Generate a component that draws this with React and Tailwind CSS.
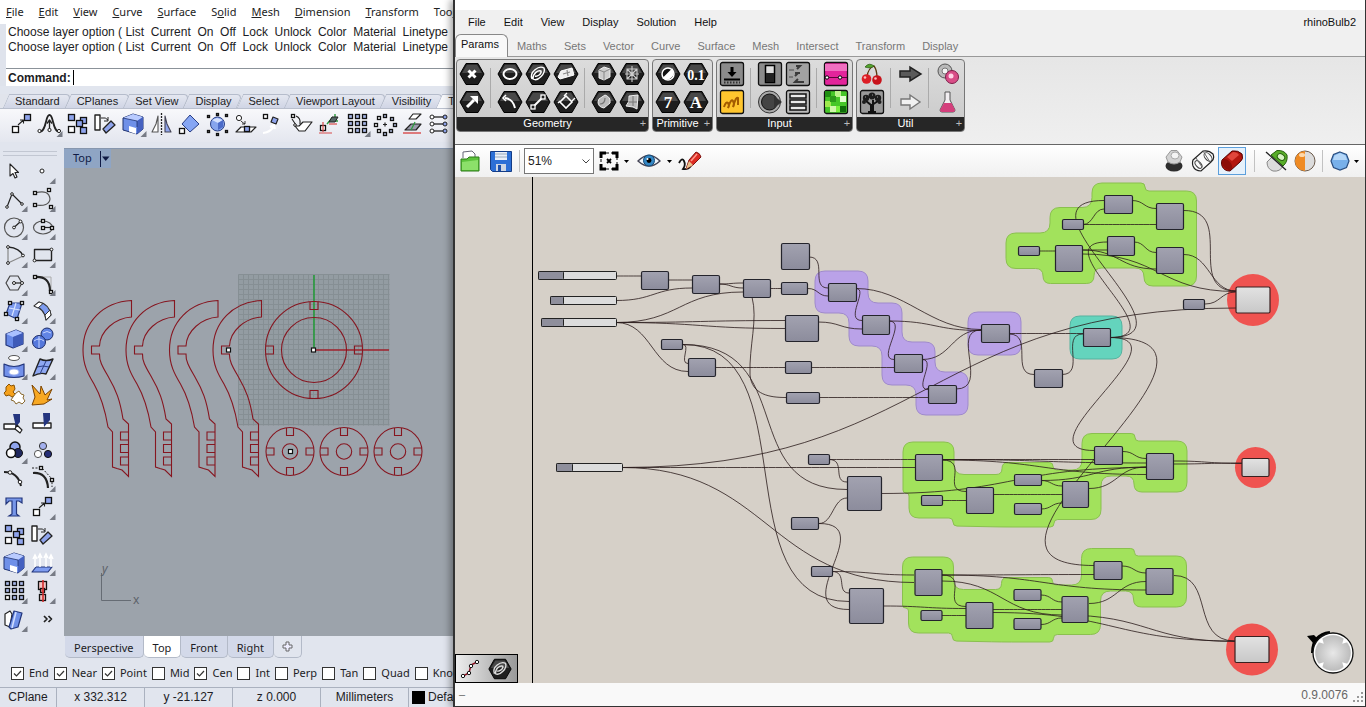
import { useState } from 'react'
import clsx from 'clsx'

const BLUE = '#8fa4ec'

// ---------- shared helpers ----------

// Turns a list of corners into a path with every corner rounded by r.
function roundedPath(pts, r) {
  const n = pts.length
  let d = ''
  pts.forEach(([x, y], i) => {
    const [px, py] = pts[(i + n - 1) % n]
    const [nx, ny] = pts[(i + 1) % n]
    const lenIn = Math.hypot(px - x, py - y)
    const lenOut = Math.hypot(nx - x, ny - y)
    const k = Math.min(r, lenIn / 2, lenOut / 2)
    const ax = x + ((px - x) / lenIn) * k
    const ay = y + ((py - y) / lenIn) * k
    const bx = x + ((nx - x) / lenOut) * k
    const by = y + ((ny - y) / lenOut) * k
    d += `${i ? 'L' : 'M'}${ax} ${ay}Q${x} ${y} ${bx} ${by}`
  })
  return d + 'Z'
}

function wirePath([x1, y1, x2, y2, c1, c2]) {
  const mid = (x1 + x2) / 2
  return `M${x1} ${y1}C${c1 ?? mid} ${y1} ${c2 ?? mid} ${y2} ${x2} ${y2}`
}

// ---------- Rhino icons ----------

function Sq({ x, y, s = 5, fill = '#fff' }) {
  return <rect x={x + 0.5} y={y + 0.5} width={s} height={s} fill={fill} stroke="#111" strokeWidth="1.3" />
}

function Dot({ x, y, r = 1.6, fill = '#fff' }) {
  return <circle cx={x} cy={y} r={r} fill={fill} stroke="#222" strokeWidth="1" />
}

function Line({ d, w = 1.2, c = '#222', fill = 'none', dash }) {
  return <path d={d} fill={fill} stroke={c} strokeWidth={w} strokeDasharray={dash} strokeLinejoin="round" />
}

const MoveIcon = (
  <>
    <Sq x={5} y={16} s={6} />
    <Sq x={17} y={4} s={6} fill={BLUE} />
    <Line d="M11 15L16.500 10M13 10H16.500V13.500" w={1.1} />
  </>
)
const CopyIcon = (
  <>
    <Sq x={5} y={4} s={6} fill={BLUE} />
    <Sq x={5} y={16} s={6} />
    <Sq x={17} y={7} s={6} fill={BLUE} />
    <Sq x={13} y={10} s={6} fill={BLUE} />
    <Sq x={17} y={17} s={6} fill={BLUE} />
  </>
)
const RotateIcon = (
  <>
    <Line d="M4 5H9V20H4Z" fill="#fff" w={1.4} />
    <Line d="M20 11L24 15L15 23L12 19Z" fill={BLUE} w={1.3} />
    <Line d="M10 8Q15 7 17 10M17 7V11H13" w={1} />
  </>
)
const NotchCubeIcon = (
  <>
    <Line d="M4 8L14 4L24 7V19L18 24L4 20Z" fill="#6f90e8" w={1} c="#1f3270" />
    <path d="M4 8L14 4L24 7L18 11Z" fill="#b9cbff" />
    <path d="M18 11L24 7V19L18 24Z" fill="#4561c0" />
    <path d="M10 16L17 18V24L10 21.500Z" fill="#fff" />
    <Line d="M4 8L18 11V17" w={0.8} c="#1f3270" />
  </>
)
const GridIcon = (
  <>
    {[0, 1, 2].map(r => [0, 1, 2].map(c => (
      <Sq key={`${r}${c}`} x={5 + c * 7} y={4 + r * 7} s={4} fill={r === 2 && c === 0 ? '#fff' : '#a9b8e8'} />
    )))}
  </>
)

const TOOLBAR = [
  { name: 'Move', icon: MoveIcon },
  {
    name: 'Soft move', fly: true, icon: (
      <>
        <Line d="M4 22C12 22 10 5 14.500 5S17 22 25 22" w={1.8} />
        <Line d="M14.500 22V11M12 13.500L14.500 10L17 13.500" w={1.3} />
        <Dot x={4.500} y={21} /><Dot x={14.500} y={20} /><Dot x={24} y={21} />
      </>
    ),
  },
  { name: 'Copy', icon: CopyIcon },
  { name: 'Rotate', icon: RotateIcon },
  { name: 'Scale', icon: NotchCubeIcon, fly: true },
  {
    name: 'Mirror', icon: (
      <>
        <Line d="M14.500 3V25" dash="2 1" w={1.3} />
        <Line d="M11 6V22H5L9 14Z" fill="#fff" w={1.1} c="#555" />
        <Line d="M18 6V22H24L20 14Z" fill={BLUE} w={1.1} c="#445" />
      </>
    ),
  },
  {
    name: 'Orient', icon: (
      <>
        <Line d="M15 5L24 14L15 22L7 14Z" fill="#86a6f4" w={1} c="#2a3f86" />
        <Sq x={4} y={18} s={5} />
      </>
    ),
  },
  {
    name: 'Cage', icon: (
      <>
        <circle cx="14.500" cy="14" r="7" fill="#87a5ee" stroke="#2a3f86" />
        <path d="M9 10L14 8L20 10L15 13Z" fill="#d6e2ff" />
        <path d="M15 13L20 10V17L15 20Z" fill="#4c6bc9" />
        {[[4, 5], [22, 4], [4, 20], [22, 20], [13, 3], [13, 23]].map(([x, y]) => <Sq key={`${x}-${y}`} x={x} y={y} s={2} />)}
      </>
    ),
  },
  {
    name: 'Project', icon: (
      <>
        <Dot x={8} y={8} r={2.6} />
        <Line d="M5 22L10 17H25L20 22Z" fill="#fff" w={1.2} />
        <Line d="M10 11Q12 13 14 14M14 11V14H11" w={0.9} />
        <Sq x={13} y={16} s={5} fill={BLUE} />
      </>
    ),
  },
  {
    name: 'Twist', icon: (
      <>
        <Sq x={4} y={4} s={4} />
        <Line d="M14 7L19 9L17 14L12 12Z" fill={BLUE} />
        <Line d="M4 23Q12 22 15 16M11 17L15 15L16 19" w={2} c="#fff" />
      </>
    ),
  },
  {
    name: 'Orient on surface', icon: (
      <>
        <Sq x={4} y={4} s={3} />
        <Line d="M9 6Q14 8 13 14M5 9L9 15" w={1.1} />
        <Line d="M8 16L12 21H18L25 12H16L12 16Z" fill="#fff" w={1.2} />
        <Dot x={8} y={15} r={1.3} />
      </>
    ),
  },
  {
    name: 'Remap', icon: (
      <>
        <Sq x={5} y={15} s={5} />
        <Line d="M4 23H17M8 22V12" c="#d84a4a" w={1.2} />
        <Line d="M12 14L18 7M20 9V4M14 11L23 11" c="#2b9b3c" w={1.4} />
        <Line d="M14 12L17 7H23L20 12Z" fill="#566" w={1} />
        <Line d="M14 14H22" c="#d84a4a" />
      </>
    ),
  },
  { name: 'Rectangular array', icon: GridIcon, fly: true },
  {
    name: 'Polar array', icon: (
      <>
        {[[12, 4], [19, 7], [22, 13], [18, 19], [12, 22], [6, 19], [3, 13], [6, 6]].map(([x, y], i) => (
          <Sq key={i} x={x} y={y} s={3} fill={i > 4 ? '#fff' : '#b3bede'} />
        ))}
        <Line d="M12 14.500H16M14 12.500V16.500" />
      </>
    ),
  },
  {
    name: 'Flow along surface', icon: (
      <>
        <Line d="M10 9L14 4H22L17 9Z" fill="#fff" />
        <Line d="M6 20L12 14H22L17 20Z" fill="#99a" />
        <Line d="M4 23H22" c="#d84a4a" w={1.4} />
        <Line d="M12 20L16 12" c="#2b9b3c" w={1.3} />
      </>
    ),
  },
  {
    name: 'Set points', icon: (
      <>
        {[7, 14, 21].map(y => (
          <g key={y}>
            <Line d={`M6 ${y}H18`} w={1.3} />
            <Dot x={5} y={y} r={2} /><Dot x={18} y={y} r={2} fill={BLUE} />
          </g>
        ))}
      </>
    ),
  },
]

const PALETTE = [
  { name: 'Select', icon: <Line d="M10 7V19L13 16.500L15 21L17 20L15 15.500H18.500Z" fill="#fff" w={1.1} /> },
  { name: 'Point', fly: true, icon: <Dot x={14} y={14} r={2} /> },
  { name: 'Polyline', fly: true, icon: <><Line d="M7 22L12 9L22 19" /><Dot x={7} y={22} r={1.3} /><Dot x={12} y={9} r={1.3} /><Dot x={22} y={19} r={1.3} /></> },
  { name: 'Curve', fly: true, icon: <><Line d="M7 8Q21 4 22 14Q21 22 7 20" c="#555" /><Sq x={5} y={6} s={3} /><Sq x={19} y={3} s={3} /><Sq x={5} y={18} s={3} /><Sq x={21} y={20} s={3} /></> },
  { name: 'Circle', fly: true, icon: <><circle cx="14" cy="14.500" r="9.500" fill="none" stroke="#555" strokeWidth="1.200" /><Line d="M14 14.500L20 9" /><Dot x={14} y={14.500} r={1.4} /><Dot x={20.500} y={8.500} r={1.4} /></> },
  { name: 'Ellipse', fly: true, icon: <><ellipse cx="15" cy="14.500" rx="9.500" ry="6.500" fill="none" stroke="#555" strokeWidth="1.200" /><Line d="M15 14.500H24" /><Sq x={13} y={13} s={3} /><Sq x={13} y={6} s={3} /><Sq x={22} y={13} s={3} /></> },
  { name: 'Arc', fly: true, icon: <><Line d="M8 6Q20 7 23 15" w={1.5} /><Line d="M8 6V22L23 15" c="#888" /><Dot x={8} y={6} r={1.4} /><Dot x={8} y={22} r={1.4} /><Dot x={23} y={14.500} r={1.4} /></> },
  { name: 'Rectangle', fly: true, icon: <><Line d="M6.500 8.500H23.500V19.500H6.500Z" w={1.4} /><Dot x={6.500} y={19.500} r={1.4} /><Dot x={23.500} y={8.500} r={1.4} /></> },
  { name: 'Polygon', fly: true, icon: <><Line d="M6 14L10 7H18L22 14L18 21H10Z" c="#444" /><Line d="M14 14H22" /><Dot x={14} y={14} r={1.5} /><Dot x={22} y={14} r={1.5} /></> },
  { name: 'Fillet', fly: true, icon: <><Line d="M6 8H23V24" c="#aaa" w={1} /><Line d="M7 8Q22 7 22 22" w={2.2} /><Sq x={5} y={6} s={3} /><Sq x={21} y={21} s={3} /></> },
  { name: 'Surface from points', fly: true, icon: <><Line d="M10 6H22L17 22L6 17Z" fill="#7e9cf0" c="#2a3f86" /><Line d="M9 11L20 13M16 6L12 19" c="#d6e2ff" /><Sq x={8} y={4} s={3} /><Sq x={20} y={4} s={3} /><Sq x={4} y={15} s={3} /><Sq x={15} y={20} s={3} /></> },
  { name: 'Loft', fly: true, icon: <><Line d="M11 5Q21 7 23 18L18 23Q17 12 6 9Z" fill="#7e9cf0" c="#333" /><path d="M11 5L15 6.500L10 11L6 9Z" fill="#fff" stroke="#333" /><path d="M23 18L18 23L17 18L22 13Z" fill="#fff" stroke="#333" /></> },
  { name: 'Box', fly: true, icon: <><Line d="M6 9L16 5L23 8V19L13 23L6 20Z" fill="#6688e6" c="#23367c" /><path d="M6 9L16 5L23 8L13 12Z" fill="#a9c0ff" /><path d="M13 12L23 8V19L13 23Z" fill="#3f5bb8" /></> },
  { name: 'Spheres', fly: true, icon: <><circle cx="19" cy="9" r="6" fill="#6184e4" stroke="#1c2b66" /><circle cx="11" cy="17" r="6.500" fill="#5578dc" stroke="#1c2b66" /><path d="M15 8Q19 5 23 8M6 16Q11 12 16 16M11 11V23" stroke="#c5d4ff" fill="none" /></> },
  { name: 'Revolve', fly: true, icon: <><ellipse cx="14" cy="5" rx="5.500" ry="2.500" fill="#fff" stroke="#555" /><Line d="M4 11Q14 16 24 11V23Q14 26 4 23Z" fill="#7391ea" c="#23367c" /><ellipse cx="14" cy="19" rx="5" ry="3" fill="#fff" stroke="#a7b9f3" /></> },
  { name: 'Patch', fly: true, icon: <><Line d="M12 6Q18 9 25 6L18 21Q12 19 5 23Z" fill="#8ea8f2" c="#222" w={1.4} /><Line d="M9 14Q15 12 21 14M18 8L12 21" c="#2a3f86" w={1} /></> },
  { name: 'Plug-ins', icon: <><path d="M6 6l3-3 2 2 3-1 1 4-2 3 3 3-4 2-3-2-3 1-2-3 2-2z" fill="#f5a11c" stroke="#8b5200" /><path d="M16 12l3-2 2 3 3 1-1 3 2 3-3 3-3-2-3 2-2-3-3-1 2-3z" fill="#fff" stroke="#8a6a30" /></> },
  { name: 'Explode', icon: <path d="M4 4L12 13L13 5L17 14L24 8L19 19L24 18L16 23L4 24L7 16Z" fill="#f7a823" stroke="#7c4300" strokeWidth="1" /> },
  { name: 'Trim', icon: <><Line d="M4 15H16V20H4Z" fill="#fff" w={1.4} /><path d="M13 5H20V13L16 18Z" fill="#24357f" /><Line d="M17 16L22 21L20 24L15 20Z" fill="#fff" /></> },
  { name: 'Split', icon: <><Line d="M5 14H23V19H5Z" fill="#fff" w={1.4} /><path d="M15 4H22V11L16 18Z" fill="#24357f" /></> },
  { name: 'Group', fly: true, icon: <><circle cx="15" cy="10" r="5" fill="#8fa4ec" stroke="#111" strokeWidth="1.500" /><circle cx="18" cy="16" r="4.500" fill="#20285e" stroke="#111" /><circle cx="11" cy="16" r="4.500" fill="#fff" stroke="#111" strokeWidth="1.500" /></> },
  { name: 'Ungroup', icon: <><circle cx="15" cy="9" r="3.600" fill="#a3b0ee" stroke="#333" /><circle cx="10" cy="17" r="3.600" fill="#fff" stroke="#555" /><circle cx="20" cy="17" r="3.600" fill="#262e77" stroke="#111" /></> },
  { name: 'Join', icon: <><Line d="M4 7Q18 7 21 21" w={2} /><Dot x={10} y={7.500} r={1.8} /><Dot x={20} y={17} r={1.8} /></> },
  { name: 'Edit points', fly: true, icon: <><Line d="M5 8Q19 7 20 23" w={2.2} /><Line d="M4 3H14L24 14V22" dash="2 1.500" w={1} /><Sq x={11} y={1} s={3} /><Sq x={22} y={13} s={3} /></> },
  { name: 'Text', icon: <path d="M6 5H22V10L19 8H16.500V21L19 23H9L12 21V8H9L6 11Z" fill="#7796e8" stroke="#23367c" strokeWidth="1.200" /> },
  { name: 'Move', icon: MoveIcon, fly: true },
  { name: 'Copy', icon: CopyIcon },
  { name: 'Rotate', icon: RotateIcon },
  { name: 'Scale', icon: NotchCubeIcon, fly: true },
  { name: 'Extrude', fly: true, icon: <><Line d="M4 23L8 18H24L20 23Z" fill="#7e9cf0" c="#23367c" /><path d="M7 18V8M12 18V6M18 18V6M23 18V8M5 10l2-4 2 4M10 9l2-4 2 4M16 9l2-4 2 4M21 10l2-4 2 4" stroke="#fff" strokeWidth="1.500" fill="none" /></> },
  { name: 'Array', icon: GridIcon, fly: true },
  { name: 'Align', fly: true, icon: <><Sq x={10} y={4} s={8} fill="#f2c3c3" /><Sq x={12} y={11} s={4} fill="#e88" /><Sq x={11} y={17} s={6} fill="#f2c3c3" /><Line d="M15 3V25" c="#d22b2b" w={1.6} /></> },
  { name: 'Bend', fly: true, icon: <><Line d="M5 9L10 6L12 9L10 22L5 20Z" fill="#fff" /><Line d="M14 6L22 8L18 22L11 24L9 22Z" fill="#6f90e8" c="#23367c" /><Line d="M16 7L12 23" c="#cfdcff" w={1.5} /></> },
  { name: 'More', icon: <Line d="M16 11L19 14L16 17M20.500 11L23.500 14L20.500 17" w={1.7} /> },
]

function ToolButton({ name, icon, fly }) {
  return (
    <button type="button" aria-label={name} className="w-7 h-7 shrink-0">
      <svg width="28" height="28" viewBox="0 0 28 28">
        {icon}
        {fly && <path d="M27.500 21V27H21.500Z" fill="#777b85" />}
      </svg>
    </button>
  )
}

// ---------- Rhino window ----------

const RHINO_MENU = ['File', 'Edit', 'View', 'Curve', 'Surface', 'Solid', 'Mesh', 'Dimension', 'Transform', 'Tools']
const ACCESS_KEY = { Solid: 1, Tools: 3 }
const TOOL_TABS = ['Standard', 'CPlanes', 'Set View', 'Display', 'Select', 'Viewport Layout', 'Visibility']
const HISTORY = 'Choose layer option ( List  Current  On  Off  Lock  Unlock  Color  Material  Linetype'
const OSNAPS = [
  ['End', true], ['Near', true], ['Point', true], ['Mid', false], ['Cen', true],
  ['Int', false], ['Perp', false], ['Tan', false], ['Quad', false], ['Knot', false],
]

function MenuLabel({ text }) {
  const i = ACCESS_KEY[text] ?? 0
  return <>{text.slice(0, i)}<span className="underline">{text[i]}</span>{text.slice(i + 1)}</>
}

function Arm({ dx }) {
  return (
    <g transform={`translate(${dx} 0)`}>
      <path d="M131.500 300.500C103 302 83 322 83 350C83 365 88 374 94 384C102 398 106 415 108 427L112.500 432V467L117 468.500L122 470L128.500 476.500V424L123 419C120 400 116 390 109 378C104 369 99 362 99.500 354H91.500V346H99.500C100 331 115 318 131.500 317Z" />
      {[432, 444.5, 457].map(y => <path key={y} d={`M128.500 ${y}H120.500V${y + 8}H128.500`} />)}
    </g>
  )
}

function Disc({ cx, cy, r, inner, n, depth }) {
  return (
    <g>
      <circle cx={cx} cy={cy} r={r} />
      <circle cx={cx} cy={cy} r={inner} />
      {[0, 90, 180, 270].map(a => (
        <path key={a} transform={`rotate(${a} ${cx} ${cy})`} d={`M${cx - n} ${cy - r + 0.5}V${cy - r + depth}H${cx + n}V${cy - r + 0.5}`} />
      ))}
    </g>
  )
}

function TopViewport() {
  const steps = Array.from({ length: 31 }, (_, i) => i * 5)
  return (
    <svg className="block w-full h-full" aria-label="Top">
      <g transform="translate(-64 -149)">
        <rect x="238.500" y="274.500" width="151" height="151" fill="#939ca2" />
        <g stroke="#868f94" strokeWidth="1">
          {steps.map(s => <path key={s} d={`M${238.5 + s} 274.500V425.500M238.500 ${274.5 + s}H389.500`} />)}
        </g>
        <path d="M314 350V275" stroke="#1f9a35" strokeWidth="1.500" />
        <path d="M314 350H389" stroke="#a1222c" strokeWidth="1.500" />
        <g fill="none" stroke="#861620" strokeWidth="1.100">
          {[0, 43, 86.5, 130].map(dx => <Arm key={dx} dx={dx} />)}
          <Disc cx={314} cy={350} r={48.5} inner={32.5} n={4} depth={8} />
          {[290, 344, 398].map(cx => <Disc key={cx} cx={cx} cy={451.5} r={24} inner={7.7} n={3.5} depth={8} />)}
        </g>
        {[[228.5, 350], [313.5, 350], [290.5, 451.5]].map(([x, y]) => (
          <rect key={x} x={x - 2} y={y - 2} width="4" height="4" fill="#fff" stroke="#111" strokeWidth="1.200" />
        ))}
        <path d="M101.500 573V600.500H131" fill="none" stroke="#666c74" />
        <text x="102" y="573" fontSize="12" fill="#5c626a" fontFamily="Noto Sans, sans-serif" fontStyle="italic">y</text>
        <text x="133" y="604" fontSize="12" fill="#5c626a" fontFamily="Noto Sans, sans-serif">x</text>
      </g>
    </svg>
  )
}

function Osnap({ label, initial }) {
  const [on, setOn] = useState(initial)
  return (
    <label className="flex items-center gap-[5px] shrink-0">
      <span className="grid w-[13px] h-[13px]">
        <input
          type="checkbox"
          checked={on}
          onChange={e => setOn(e.target.checked)}
          className="col-start-1 row-start-1 appearance-none w-[13px] h-[13px] bg-white border border-[#333]"
        />
        {on && (
          <svg viewBox="0 0 13 13" className="col-start-1 row-start-1 pointer-events-none">
            <path d="M3 6.500L5.500 9L10 4" fill="none" stroke="#333" strokeWidth="1.200" />
          </svg>
        )}
      </span>
      {label}
    </label>
  )
}

function Rhino() {
  const [command, setCommand] = useState('')
  return (
    <div className="w-[453px] shrink-0 h-full flex flex-col overflow-hidden bg-[#e1e5ee] text-[#1c1c24] font-['Liberation_Sans',sans-serif] text-xs whitespace-nowrap">
      <nav className="h-6 shrink-0 bg-white flex items-center gap-[15px] pl-[6px] font-['Noto_Sans',sans-serif] text-[11px] text-[#222]">
        {RHINO_MENU.map(m => <button type="button" key={m} className="shrink-0"><MenuLabel text={m} /></button>)}
      </nav>

      <div className="shrink-0 border-l-[6px] border-[#dfe3ec] bg-white">
        <div className="h-11 pt-px pl-[2px] leading-[15px] whitespace-pre">
          <div>{HISTORY}</div>
          <div>{HISTORY}</div>
        </div>
        <div className="h-[18px] border-t border-[#8b9299] flex items-center pl-[2px]">
          <label htmlFor="command" className="font-bold">Command:</label>
          <span className="ml-[2px] w-px h-[15px] bg-black" />
          <input
            id="command"
            value={command}
            onChange={e => setCommand(e.target.value)}
            className="flex-1 min-w-0 outline-none"
          />
        </div>
      </div>

      <div className="isolate shrink-0 mt-2 h-[15px] flex pl-[7px] gap-px text-[11px] border-b border-[#b9bfcd] bg-[#e1e4ec] *:relative *:shrink-0 *:px-2 *:leading-[14px] *:before:absolute *:before:-inset-x-px *:before:inset-y-0 *:before:-z-10 *:before:-skew-x-[24deg] *:before:rounded-tr-[6px] *:before:border *:before:border-b-0 *:before:border-[#b5bccb]">
        {TOOL_TABS.map(t => (
          <button type="button" key={t} className="before:bg-linear-to-b before:from-[#e4e7f0] before:to-[#d0d5e5]">{t}</button>
        ))}
        <button type="button" className="before:bg-[#f7f8fb]">Transform</button>
      </div>
      <div className="shrink-0 h-[33px] flex items-start pt-px pl-[7px] overflow-hidden bg-linear-to-b from-[#f8f8fb] to-[#e4e7ef]">
        {TOOLBAR.map(t => <ToolButton key={t.name} {...t} />)}
      </div>

      <div className="flex-1 min-h-0 flex pt-[6px]">
        <div className="w-16 shrink-0">
          <div className="ml-[3px] w-[54px] h-[5px] mt-[3px] mb-px border-y border-[#c2c7d2]" />
          <div className="grid grid-cols-2 w-14">
            {PALETTE.map(t => <ToolButton key={t.name} {...t} />)}
          </div>
        </div>
        <div className="flex-1 min-w-0 flex flex-col">
          <div className="relative flex-1 min-h-0 border-t border-[#8797ae] bg-[#9ca3ab] overflow-hidden">
            <TopViewport />
            <div className="absolute left-0 top-0 h-[19px] bg-[#8fa5c4] flex items-center pl-[9px] pr-px font-['Noto_Sans',sans-serif] text-[11px] text-[#101b45]">
              Top
              <span className="ml-2 w-px h-4 bg-[#101b45]" />
              <button type="button" aria-label="Viewport menu">
                <svg width="9" height="9" viewBox="0 0 9 9"><path d="M1 2.500H8.500L4.750 7Z" fill="#101b45" /></svg>
              </button>
            </div>
          </div>
          <div className="h-[23px] shrink-0 flex items-start pl-px font-['Noto_Sans',sans-serif] text-[11px] leading-5">
            {['Perspective', 'Top', 'Front', 'Right'].map(t => (
              <button
                type="button"
                key={t}
                className={clsx(
                  'h-[22px] pt-[2px] px-[9px] border-r border-b border-[#b3bac8] rounded-b-[5px]',
                  t === 'Top' ? 'bg-white' : 'bg-[#d3d9e9]',
                )}
              >
                {t}
              </button>
            ))}
            <button type="button" aria-label="New viewport" className="h-[22px] px-2 border-r border-b border-[#b3bac8] rounded-b-[5px]">
              <svg width="11" height="11" viewBox="0 0 11 11">
                <path d="M4 1H7V4H10V7H7V10H4V7H1V4H4Z" fill="#eef" stroke="#666" />
              </svg>
            </button>
          </div>
        </div>
      </div>

      <div className="shrink-0 h-7 flex items-center pt-px pl-[11px] gap-[5px] font-['Noto_Sans',sans-serif] text-[11px]">
        {OSNAPS.map(([label, on]) => <Osnap key={label} label={label} initial={on} />)}
      </div>
      <div className="shrink-0 h-5 flex items-center border-t border-[#aab1bf] *:h-full *:leading-[19px] *:border-r *:border-[#aab1bf] *:text-center *:shrink-0">
        <div className="w-[57px]">CPlane</div>
        <div className="w-[88px]">x 332.312</div>
        <div className="w-[88px]">y -21.127</div>
        <div className="w-[88px]">z 0.000</div>
        <div className="w-[88px]">Millimeters</div>
        <div className="flex items-center pl-[3px] gap-[3px]"><span className="size-[13px] bg-black" />Default</div>
      </div>
    </div>
  )
}

// ---------- Grasshopper ribbon ----------

function Hex({ children }) {
  return (
    <>
      <path d="M2 14L8 3.500H20L26 14L20 24.500H8Z" fill="#1e1e1e" stroke="#000" />
      <path d="M4 13L9 4.800H19L24 13Z" fill="#484848" />
      <g fill="none" stroke="#fff" strokeWidth="2">{children}</g>
    </>
  )
}

function Tile({ fill = '#8b8b8b', children }) {
  return (
    <>
      <rect x="2.500" y="2.500" width="23" height="23" rx="2" fill={fill} stroke="#111" strokeWidth="1.300" />
      {children}
    </>
  )
}

const HexText = ({ children, size }) => (
  <text x="14" y="20" textAnchor="middle" fontSize={size} fontWeight="bold" fill="#fff" stroke="none" fontFamily="Liberation Serif, serif">{children}</text>
)

const RIBBON = [
  {
    title: 'Geometry',
    sets: [
      [
        { name: 'Point', icon: <Hex><path d="M10.500 10.500L17.500 17.500M17.500 10.500L10.500 17.500" strokeWidth="3" /></Hex> },
        { name: 'Vector', icon: <Hex><path d="M9 19L16 12" strokeWidth="3" /><path d="M12 8H20V16Z" fill="#fff" stroke="none" /></Hex> },
      ],
      [
        { name: 'Circle', icon: <Hex><ellipse cx="14" cy="14" rx="6.500" ry="5" /></Hex> },
        { name: 'Circular Arc', icon: <Hex><path d="M9 10Q17 11 19 20" /><path d="M10 7L7 10L10 13" strokeWidth="1.500" /></Hex> },
        { name: 'Curve', icon: <Hex><path d="M8 19C5 12 15 5 20 8C22 13 14 22 9 19C9 13 14 10 17 11C18 14 13 17 11 16" strokeWidth="1.400" /></Hex> },
        { name: 'Line', icon: <Hex><path d="M10 18L18 10" /><rect x="7" y="17" width="4" height="4" fill="#222" strokeWidth="1.300" /><rect x="17" y="7" width="4" height="4" fill="#222" strokeWidth="1.300" /></Hex> },
        { name: 'Plane', icon: <Hex><path d="M9 11L20 8L22 15L8 19L6 17Z" fill="#eee" strokeWidth="1" /><path d="M11 14L18 12M15 10L16 16" stroke="#888" strokeWidth="1.200" /></Hex> },
        { name: 'Rectangle', icon: <Hex><path d="M14 8L20 14L14 20L8 14Z" strokeWidth="1.600" /><path d="M12 8L15 5M20 13L23 10M6 15L8 13" strokeWidth="1.400" /></Hex> },
      ],
      [
        { name: 'Box', icon: <Hex><path d="M9 10L14 7L20 9V17L14 20L9 18Z" fill="#ccc" stroke="#eee" strokeWidth="1" /><path d="M9 10L14 12L20 9M14 12V20" stroke="#888" strokeWidth="1" /></Hex> },
        { name: 'Brep', icon: <Hex><path d="M9 11L15 7Q21 9 20 15L14 20Q8 19 8 14Z" fill="#bbb" stroke="#eee" strokeWidth="1" /><path d="M10 16Q15 16 15 10" stroke="#777" strokeWidth="1.200" /></Hex> },
        { name: 'Mesh', icon: <Hex><path d="M9 9H19V19H9ZM14 6V22M7 14H21M9 9L19 19M19 9L9 19" strokeWidth="1.100" stroke="#ccc" /></Hex> },
        { name: 'Surface', icon: <Hex><path d="M11 8L20 7L19 21L15 19L8 18Q12 14 11 8Z" fill="#bbb" stroke="#eee" strokeWidth="1" /><path d="M15 8V18M11 14H19" stroke="#777" strokeWidth="1" /></Hex> },
      ],
    ],
  },
  {
    title: 'Primitive',
    sets: [
      [
        { name: 'Boolean', icon: <Hex><circle cx="14" cy="14" r="6" fill="#111" strokeWidth="1.500" /><path d="M18 10A6 6 0 0 1 10 18Z" fill="#fff" /></Hex> },
        { name: 'Integer', icon: <Hex><HexText size="17">7</HexText></Hex> },
        { name: 'Number', icon: <Hex><HexText size="14">0.1</HexText></Hex> },
        { name: 'Text', icon: <Hex><HexText size="17">A</HexText></Hex> },
      ],
    ],
  },
  {
    title: 'Input',
    sets: [
      [
        { name: 'Button', icon: <Tile><path d="M14 7V13" stroke="#000" strokeWidth="3" /><path d="M9.500 12H18.500L14 17Z" /><path d="M6 19.500H22" stroke="#000" strokeWidth="2" /><path d="M6 22.500H22" stroke="#333" strokeWidth="2" strokeDasharray="1.500 1.500" /></Tile> },
        { name: 'Number Slider', icon: <Tile fill="#ffc62e"><path d="M6 19Q8 13 10 15T10 20Q13 10 15 13T15 19Q18 8 20 10V17" fill="none" stroke="#a35c00" strokeWidth="2" /></Tile> },
      ],
      [
        { name: 'Boolean Toggle', icon: <Tile><rect x="9.500" y="5.500" width="9" height="17" fill="#ddd" stroke="#000" strokeWidth="1.500" /><rect x="10" y="13" width="8" height="9" fill="#222" /></Tile> },
        { name: 'Control Knob', icon: <><circle cx="13.500" cy="14" r="11" fill="#aaa" stroke="#333" /><circle cx="13.500" cy="14" r="8" fill="#444" stroke="#111" /><path d="M18 8L26 14L18 20Z" fill="#333" /></> },
        { name: 'Digit Scroller', icon: <Tile fill="#a2a2a2"><path d="M12 6H16L13 9M11 13H16M14 13L11 16M14 19L11 22L20 22" stroke="#3a3a3a" strokeWidth="2" fill="none" /><path d="M5 10H10M5 17H9" stroke="#777" strokeWidth="2" /></Tile> },
        { name: 'Value List', icon: <Tile fill="#bbb">{[6, 12, 18].map(y => <rect key={y} x="6" y={y} width="16" height="4" fill="#e9e9e9" stroke="#111" strokeWidth="1.500" />)}</Tile> },
      ],
      [
        { name: 'Gradient', icon: <Tile fill="#e3249b"><path d="M3 4H25V11H3Z" fill="#f06fc0" /><path d="M3 17.500H25" stroke="#5d0539" fill="none" /><circle cx="5" cy="17.500" r="1.700" fill="#fff" stroke="#000" /><circle cx="18" cy="17.500" r="1.700" fill="#fff" stroke="#000" /></Tile> },
        { name: 'Image Sampler', icon: <Tile fill="#46c728">{[[3, 3, '#1f8f12'], [13, 3, '#b9f28a'], [3, 13, '#9eea4d'], [8, 8, '#2c9a1a'], [18, 8, '#e2ffd0'], [13, 18, '#7af03e'], [18, 18, '#0f6d08'], [8, 18, '#d0f7aa']].map(([x, y, f]) => <rect key={`${x}-${y}`} x={x} y={y} width="6" height="6" fill={f} />)}</Tile> },
      ],
    ],
  },
  {
    title: 'Util',
    sets: [
      [
        { name: 'Cherry Picker', icon: <><path d="M9 17Q10 8 16 6Q19 10 19 18" fill="none" stroke="#5b3a12" strokeWidth="1.300" /><path d="M16 6Q11 2 7 7Q13 9 16 6Z" fill="#53a52c" stroke="#2c5e14" strokeWidth=".800" /><circle cx="8.500" cy="19" r="4.800" fill="#dd1f26" /><circle cx="19" cy="20" r="4.800" fill="#c8131b" /><circle cx="7" cy="17.500" r="1.300" fill="#fbb" /><circle cx="17.500" cy="18.500" r="1.300" fill="#fbb" /></> },
        { name: 'Galapagos', icon: <Tile fill="#9a9a9a"><path d="M13 24V17L8 13M14 17L20 13M15 24V12M10 24H18" stroke="#111" strokeWidth="2" fill="none" /><g fill="#1c1c1c"><circle cx="8" cy="10" r="3.200" /><circle cx="14" cy="8" r="3.500" /><circle cx="20" cy="10" r="3.200" /><circle cx="6" cy="14" r="2" /><circle cx="21.500" cy="14" r="2" /></g><path d="M7 9h1M11 11h1M16 11h1M14 7h1M19 9h1" stroke="#999" /></Tile> },
      ],
      [
        { name: 'Data', icon: <path d="M4 11H14V7L25 14L14 21V17H4Z" fill="#5a5a5a" stroke="#222" strokeWidth="1.500" /> },
        { name: 'Relay', icon: <path d="M5 11H14V7L24 14L14 21V17H5Z" fill="#f1f1f1" stroke="#777" strokeWidth="1.400" /> },
      ],
      [
        { name: 'Cluster', icon: <><circle cx="11" cy="11" r="7" fill="#b9b9b9" stroke="#555" /><circle cx="11" cy="11" r="3" fill="#f4f4f4" stroke="#777" /><circle cx="18" cy="17" r="6.500" fill="#d94d87" stroke="#7c1f48" /><circle cx="17" cy="16" r="2.500" fill="#ffd4e6" /></> },
        { name: 'Param Viewer', icon: <><path d="M11 4H16V12L21 22Q21 24 19 24H8Q6 24 6 22L11 12Z" fill="#f2eef1" stroke="#555" /><path d="M10 15H17.500L21 22Q21 24 19 24H8Q6 24 6 22Z" fill="#d43f7c" /></> },
      ],
    ],
  },
]

const GH_TABS = ['Params', 'Maths', 'Sets', 'Vector', 'Curve', 'Surface', 'Mesh', 'Intersect', 'Transform', 'Display']

function RibbonGroup({ title, sets }) {
  return (
    <section className="flex flex-col rounded-[4px] border border-[#777] bg-linear-to-b from-[#dcdcdc] to-[#c9c9c9] overflow-hidden">
      <div className="flex pl-px pr-[2px] gap-[4px]">
        {sets.map((set, i) => (
          <div key={i} className="flex gap-[5px]">
            {i > 0 && <span className="w-px my-2 bg-[#aaa]" />}
            <div className="grid grid-flow-col grid-rows-2">
              {set.map(t => (
                <button type="button" key={t.name} aria-label={t.name} className="size-7">
                  <svg width="28" height="28" viewBox="0 0 28 28">{t.icon}</svg>
                </button>
              ))}
            </div>
          </div>
        ))}
      </div>
      <div className="mt-px h-[14px] bg-[#262626] text-white text-[11px] leading-[13px] text-center flex">
        <span className="flex-1">{title}</span>
        <span className="w-[10px] text-[#bbb]">+</span>
      </div>
    </section>
  )
}

function Caret() {
  return <svg width="5" height="3" viewBox="0 0 5 3"><path d="M0 0H5L2.500 3Z" /></svg>
}

function ToolIcon({ name, children, active }) {
  return (
    <button type="button" aria-label={name} className={clsx('w-7 h-7 shrink-0 grid place-items-center border', active ? 'border-[#5c9fdc] bg-[#e6f1fb]' : 'border-transparent')}>
      <svg width="24" height="24" viewBox="0 0 24 24">{children}</svg>
    </button>
  )
}

function CanvasToolbar() {
  const [zoom, setZoom] = useState('51%')
  return (
    <div className="shrink-0 h-[33px] flex items-center border-t border-[#666] bg-linear-to-b from-white to-[#f0f0f0] pl-px pr-[6px]">
      <ToolIcon name="Open">
        <path d="M5 9V3L14 2L17 5V10" fill="#fff" stroke="#667" />
        <path d="M3 22V10H9L11 8H21V22Z" fill="#5cc23c" stroke="#2d7a18" />
        <path d="M4 21V13L20 11V21Z" fill="#8ce06a" />
      </ToolIcon>
      <span className="w-[3px]" />
      <ToolIcon name="Save">
        <path d="M1.500 2.500H22.500V22.500H3.500L1.500 20.500Z" fill="#2c6fd6" stroke="#143c86" />
        <path d="M6 3H18V11H6Z" fill="#e9eef8" /><path d="M6 5H18M6 8H18" stroke="#9ab" />
        <path d="M7 15H17V22H7Z" fill="#cdd6e4" /><path d="M9 16H12V22H9Z" fill="#1c4faa" />
      </ToolIcon>
      <span className="mx-1 w-px h-[22px] bg-[#c2c2c2]" />
      <div className="grid w-[70px] h-[26px] mr-px">
        <select
          aria-label="Zoom"
          value={zoom}
          onChange={e => setZoom(e.target.value)}
          className="col-start-1 row-start-1 appearance-none bg-white border border-[#777] pl-[3px] text-xs text-[#222]"
        >
          <option>51%</option>
          <option>100%</option>
          <option>200%</option>
        </select>
        <svg width="8" height="5" viewBox="0 0 8 5" className="col-start-1 row-start-1 self-center justify-self-end mr-1 pointer-events-none">
          <path d="M0.500 0.500L4 4L7.500 0.500" fill="none" stroke="#444" />
        </svg>
      </div>
      <ToolIcon name="Zoom extents">
        <path d="M4 9V4H9M15 4H20V9M20 15V20H15M9 20H4V15" fill="none" stroke="#000" strokeWidth="3" />
        <path d="M4 4H20V20H4Z" fill="none" stroke="#000" strokeDasharray="3 2" />
        <path d="M10 10L14 14M14 10L10 14" stroke="#000" strokeWidth="1.800" />
      </ToolIcon>
      <span className="w-px" />
      <Caret />
      <span className="w-[6px]" />
      <ToolIcon name="Preview">
        <path d="M1 12Q12 1 23 12Q12 22 1 12Z" fill="#eef5fb" stroke="#445" strokeWidth="1.400" />
        <circle cx="12" cy="11.500" r="5.500" fill="#3487c4" stroke="#174b78" />
        <circle cx="12" cy="11.500" r="2.400" /><circle cx="10.500" cy="10" r="1" fill="#fff" />
      </ToolIcon>
      <span className="w-1" />
      <Caret />
      <span className="w-1" />
      <ToolIcon name="Sketch">
        <path d="M1 14Q4 8 6 12T5 20Q10 21 13 17" fill="none" stroke="#111" strokeWidth="1.800" />
        <path d="M8 20L11 11L18 3Q22 4 23 8L15 16Z" fill="#dd2b22" stroke="#7c1310" />
        <path d="M8 20L11 12L15 16Z" fill="#e9c28d" />
        <path d="M13 12L19 5" stroke="#ff9a8c" strokeWidth="1.500" />
      </ToolIcon>
      <span className="flex-1" />
      <ToolIcon name="No preview">
        <ellipse cx="12" cy="17" rx="8.500" ry="5.500" fill="#2e2e2e" />
        <path d="M4 8L9 1.500H15L20 8L18 13Q12 17 6 13Z" fill="#d2d2d2" stroke="#999" />
        <ellipse cx="13" cy="6.500" rx="4" ry="3.500" fill="#f4f4f4" stroke="#aaa" />
      </ToolIcon>
      <span className="w-px" />
      <ToolIcon name="Wireframe preview">
        <path d="M2 11L12 2Q18 1 22 5Q24 10 20 13L10 22Q4 22 2 17Q1 14 2 11Z" fill="#fafafa" stroke="#222" strokeWidth="1.200" />
        <ellipse cx="17" cy="8" rx="3" ry="5" transform="rotate(-40 17 8)" fill="none" stroke="#444" />
        <ellipse cx="7.500" cy="15.500" rx="2.500" ry="4.500" transform="rotate(-40 7.500 15.500)" fill="none" stroke="#444" />
        <path d="M5 9L11 18M12 2L19 13" stroke="#666" fill="none" />
      </ToolIcon>
      <span className="w-px" />
      <ToolIcon name="Shaded preview" active>
        <path d="M2 11L12 2Q18 1 22 5Q24 10 20 13L10 22Q4 22 2 17Q1 14 2 11Z" fill="#b3160f" stroke="#500" />
        <ellipse cx="7" cy="15.500" rx="4" ry="6.500" transform="rotate(-40 7 15.500)" fill="#8c0d08" />
        <path d="M7 8L13 3Q17 3 19 6L12 12Z" fill="#e0463c" />
      </ToolIcon>
      <span className="ml-2 mr-2 w-px h-[22px] bg-[#c2c2c2]" />
      <ToolIcon name="Preview selected">
        <path d="M2 13Q2 20 8 22Q15 23 18 17L8 7Z" fill="#dcdcdc" stroke="#888" />
        <path d="M6 6L12 1.500Q19 1 22 6Q23 13 18 17Z" fill="#58ad28" stroke="#27600c" />
        <ellipse cx="16" cy="8" rx="4" ry="3" transform="rotate(35 16 8)" fill="#d7f3c2" stroke="#27600c" />
        <path d="M1 3L21 21" stroke="#222" strokeWidth="1.300" />
      </ToolIcon>
      <ToolIcon name="Document preview">
        <circle cx="12" cy="12" r="10" fill="#dcdcdc" stroke="#6b5a4a" />
        <path d="M12 2A10 10 0 0 0 12 22Z" fill="#ef8b24" />
        <ellipse cx="9" cy="6" rx="3" ry="2" fill="#ffd8a8" />
      </ToolIcon>
      <span className="mx-[3px] w-px h-[22px] bg-[#c2c2c2]" />
      <ToolIcon name="Mesh quality">
        <path d="M12 3L18.500 5.500L21 12L18.500 18.500L12 21L5.500 18.500L3 12L5.500 5.500Z" fill="#78b0ea" stroke="#2a4e80" strokeWidth="1.200" />
        <path d="M12 4L17.500 6.500L19 11H5L6.500 6.500Z" fill="#b5d7f8" />
      </ToolIcon>
      <Caret />
    </div>
  )
}

// ---------- Grasshopper canvas ----------

const STAIR = [[815, 271], [868, 271], [868, 303], [902, 303], [902, 342], [935, 342], [935, 372], [968, 372], [968, 415], [916, 415], [916, 385], [882, 385], [882, 346], [849, 346], [849, 313], [815, 313]]
const TOP_GREEN = [[1006, 233], [1050, 233], [1050, 207.5], [1092, 207.5], [1092, 183], [1145, 183], [1145, 191], [1196.5, 191], [1196.5, 286], [1144, 286], [1144, 268], [1094, 268], [1094, 283.5], [1043, 283.5], [1043, 268.5], [1006, 268.5]]
const MID_GREEN = [[903, 442], [954, 442], [954, 474.5], [1002, 474.5], [1002, 462.5], [1053, 462.5], [1053, 470], [1082, 470], [1082, 433.5], [1135, 433.5], [1135, 441], [1187, 441], [1187, 492], [1134, 492], [1134, 476], [1101, 476], [1101, 519.5], [1054, 519.5], [1054, 527], [1002, 527], [953, 526], [953, 518], [909, 518], [909, 493], [903, 493]]
const box = (x1, y1, x2, y2) => [[x1, y1], [x2, y1], [x2, y2], [x1, y2]]

const GROUPS = [
  { pts: STAIR, fill: '#baa2e8', stroke: '#9f8acb' },
  { pts: box(968, 312, 1021, 355), fill: '#baa2e8', stroke: '#9f8acb' },
  { pts: box(1070, 316, 1122, 359), fill: '#64d4bd', stroke: '#55b39f' },
  { pts: TOP_GREEN, fill: '#a2e25c', stroke: '#8ac04f' },
  { pts: MID_GREEN, fill: '#a2e25c', stroke: '#8ac04f' },
  { pts: MID_GREEN.map(([x, y]) => [x - 0.5, y + 115]), fill: '#a2e25c', stroke: '#8ac04f' },
]

const CLUSTER = [
  [915, 454, 27, 26], [921, 495, 21, 10], [966, 487, 27, 26], [1014, 474, 27, 11],
  [1014, 503, 27, 11], [1062, 481, 26, 26], [1094, 446, 28, 18], [1146, 453, 27, 26],
]

const NODES = [
  [641, 271, 27, 18], [692, 275, 27, 18], [743, 279, 27, 18], [781, 243, 28, 26], [781, 282, 26, 12],
  [785, 315, 33, 26], [661, 339, 21, 10], [688, 358, 27, 18], [785, 361, 26, 12], [786, 392, 33, 11],
  [828, 283, 28, 18], [862, 315, 27, 19], [894, 354, 28, 18], [928, 385, 28, 18],
  [981, 324, 28, 18], [1083, 328, 27, 18], [1034, 369, 28, 18],
  [1018, 246, 21, 9], [1055, 245, 27, 26], [1062, 219, 21, 10], [1104, 195, 28, 18], [1156, 203, 27, 26],
  [1107, 236, 27, 19], [1156, 247, 27, 26], [1183, 299, 21, 10],
  [808, 454, 21, 10], [847, 476, 34, 34], [791, 517, 27, 12], [811, 566, 21, 10], [849, 588, 34, 35],
  ...CLUSTER,
  ...CLUSTER.map(([x, y, w, h]) => [x - 0.5, y + 115, w, h]),
]

// x, y, full width, width of the name plate
const SLIDERS = [[538, 271, 78, 25], [550, 296, 66, 13], [541, 318, 75, 22], [556, 463, 66, 16]]

const OUTPUTS = [
  { cx: 1253, cy: 300, r: 26, w: 34, h: 26 },
  { cx: 1255.5, cy: 467.5, r: 20.5, w: 27, h: 18 },
  { cx: 1252, cy: 649.5, r: 26, w: 34, h: 26 },
]

// x1, y1, x2, y2 and optionally the x of the two control points
const WIRES = [
  [616, 276, 641, 276], [668, 280, 692, 280], [719, 284, 743, 283], [719, 284, 743, 288],
  [616, 300.5, 692, 288], [616, 322.5, 743, 292], [616, 322.5, 785, 320.5], [616, 322.5, 785, 328.5],
  [616, 322.5, 688, 371.5], [683, 344.5, 688, 363.5, 691, 679], [683, 344.5, 847, 489.5, 800, 735],
  [683, 344.5, 849, 601.5, 810, 720], [715, 367.5, 785, 367.5], [812, 367.5, 894, 367.5],
  [819, 397.5, 928, 397.5], [770, 288.5, 781, 288.5], [808, 288.5, 828, 296], [809, 257, 828, 288, 828, 810],
  [856, 288.5, 862, 320.500, 869, 844], [856, 288.5, 981, 329.5, 905, 930], [818, 322, 862, 329],
  [889, 321, 894, 359.5, 908, 876], [889, 321, 981, 330.5], [922, 359.5, 928, 389.5, 937, 913],
  [922, 359.5, 981, 330], [956, 389, 981, 330, 990, 950],
  [622, 467.5, 1236, 308, 929, 929], [622, 467.5, 915, 467.5], [622, 467.5, 914, 582.5],
  [829, 459.5, 915, 459.5], [829, 459.5, 847, 482, 846, 832], [819, 523.5, 847, 498],
  [819, 523.5, 849, 609.5, 880, 785], [832, 571.5, 849, 593, 848, 836], [832, 571.5, 914, 575],
  [881, 493.5, 1146, 467.5], [942, 460, 966, 491.5, 970, 940], [942, 460, 1146, 474.5],
  [942, 459.5, 1146, 463], [942, 459.5, 1094, 459.5], [942, 500.5, 966, 500.5], [993, 494.5, 1062, 494.5],
  [1041, 480.5, 1062, 486], [1041, 480.5, 1146, 467], [1041, 509, 1062, 503], [1089, 488.5, 1146, 467],
  [1123, 451.5, 1146, 458.5], [1174, 461, 1242, 463.5], [1174, 464, 1242, 463],
  [1110, 337.5, 1104, 200.5, 1205, 1005], [1110, 337.5, 1107, 242, 1180, 1040],
  [1110, 337.5, 1094, 450.5, 1190, 1015], [1110, 337.5, 1094, 565.5, 1280, 920],
  [1009, 333.5, 1083, 333.5], [1009, 334, 1034, 374.5, 1034, 1010], [1062, 374.5, 1083, 334, 1086, 1060],
  [1039, 251, 1055, 251], [1083, 224.5, 1104, 209], [1083, 224.5, 1156, 224.5], [1132, 200.5, 1156, 208.5],
  [1083, 250, 1107, 250], [1083, 250, 1156, 269], [1083, 254, 1236, 291.5], [1134, 242, 1156, 252.5],
  [1184, 210.500, 1236, 291, 1236, 1185], [1184, 254.5, 1236, 291], [1205, 304, 1236, 292],
  [942, 575, 966, 606.5, 970, 940], [942, 575, 1146, 590], [942, 575, 1094, 574.5], [942, 581, 1062, 615],
  [883, 606, 966, 608.5], [993, 609.5, 1062, 609.5], [993, 612.5, 1235, 641], [1041, 595, 1062, 602],
  [1041, 624.5, 1062, 618], [942, 615.5, 966, 615.5], [1089, 603.5, 1146, 581.5], [1122, 566, 1146, 573],
  [1174, 575.5, 1235, 641, 1215, 1190], [1062, 615, 1235, 641.5],
]

function Definition() {
  return (
    <svg className="block w-full h-full" aria-label="Definition">
      <defs>
        <linearGradient id="node" x1="0" y1="0" x2="0" y2="1">
          <stop offset="0" stopColor="#a2a2b0" /><stop offset="1" stopColor="#8c8c9c" />
        </linearGradient>
        <linearGradient id="panel" x1="0" y1="0" x2="0" y2="1">
          <stop offset="0" stopColor="#e2e2e2" /><stop offset="1" stopColor="#c8c8c8" />
        </linearGradient>
      </defs>
      <g transform="translate(-455 -177)">
        <path d="M532.500 177V2000" stroke="#000" />
        {GROUPS.map((g, i) => <path key={i} d={roundedPath(g.pts, 10)} fill={g.fill} stroke={g.stroke} />)}
        {OUTPUTS.map(o => <circle key={o.cy} cx={o.cx} cy={o.cy} r={o.r} fill="#ef5350" />)}
        <g fill="none" stroke="#2b1c1c" strokeOpacity=".8" strokeWidth="1">
          {WIRES.map((w, i) => <path key={i} d={wirePath(w)} />)}
          <path d="M752 297C758 320 749 345 750 375C752 395 770 397.500 786 397.500" />
        </g>
        {SLIDERS.map(([x, y, w, plate]) => (
          <g key={y} stroke="#222">
            <rect x={x + 0.5} y={y + 0.5} width={w} height="8" rx="1" fill="#dcdcdc" />
            <rect x={x + 0.5} y={y + 0.5} width={plate} height="8" rx="1" fill="#8f8f9c" />
          </g>
        ))}
        {NODES.map(([x, y, w, h], i) => (
          <rect key={i} x={x + 0.5} y={y + 0.5} width={w} height={h} rx="1.500" fill="url(#node)" stroke="#24242c" strokeWidth="1.200" />
        ))}
        {OUTPUTS.map(o => (
          <rect key={o.cy} x={o.cx - o.w / 2} y={o.cy - o.h / 2} width={o.w} height={o.h} rx="1.500" fill="url(#panel)" stroke="#3a2020" strokeWidth="1.200" />
        ))}
      </g>
    </svg>
  )
}

function Compass() {
  return (
    <svg width="50" height="46" viewBox="0 0 50 46">
      <defs>
        <radialGradient id="dial"><stop offset="0" stopColor="#e8e8e8" /><stop offset="1" stopColor="#bdbdbd" /></radialGradient>
      </defs>
      <path d="M8 24Q8 6 25 4" fill="none" stroke="#000" strokeWidth="4" />
      <path d="M2 7L9 6L12 9L8 14Z" />
      <circle cx="28" cy="24" r="20" fill="#fff" stroke="#111" strokeWidth="1.300" />
      <circle cx="28" cy="24" r="17.500" fill="url(#dial)" stroke="#bbb" strokeWidth=".600" />
      {[45, 135, 225, 315].map(a => <path key={a} transform={`rotate(${a} 28 24)`} d="M25 5.500H31L28 11Z" fill="#fff" />)}
    </svg>
  )
}

function Grasshopper() {
  return (
    <div className="relative z-10 flex-1 min-w-0 h-full flex flex-col bg-[#f0f0f0] border-l-2 border-r border-b border-[#333] shadow-[-3px_0_7px_rgba(0,0,0,0.35)] font-['Liberation_Sans',sans-serif] text-[11px] text-[#111]">
      <div className="h-[10px] shrink-0 bg-white" />
      <nav className="h-6 shrink-0 flex items-center pl-[13px] pr-[9px] gap-[18px]">
        {['File', 'Edit', 'View', 'Display', 'Solution', 'Help'].map(m => <button type="button" key={m}>{m}</button>)}
        <span className="ml-auto">rhinoBulb2</span>
      </nav>
      <div className="h-[23px] shrink-0 flex items-end border-b border-[#999]">
        {GH_TABS.map((t, i) => (
          <button
            type="button"
            key={t}
            className={clsx(
              i === 0
                ? 'h-[23px] -mb-px pb-1 pl-[5px] pr-[8px] mr-px leading-4 bg-[#f8f8f8] border border-b-0 border-[#888] rounded-t-md'
                : 'h-[22px] px-2 mr-px pt-[2px] leading-5 text-[#777]',
            )}
          >
            {t}
          </button>
        ))}
      </div>
      <div className="shrink-0 h-[87px] flex items-start gap-[3px] pt-[2px] pl-px bg-linear-to-b from-[#e6e6e6] to-[#efefef]">
        {RIBBON.map(g => <RibbonGroup key={g.title} {...g} />)}
      </div>
      <CanvasToolbar />
      <div className="relative flex-1 min-h-0 bg-[#d6d0c8] overflow-hidden">
        <Definition />
        <div className="absolute left-0 bottom-0 w-[63px] h-[29px] flex items-center justify-around bg-linear-to-r from-[#eee] to-[#999] border border-black">
          <svg width="20" height="20" viewBox="0 0 20 20">
            <path d="M3 17L9 14L11 6L17 3" fill="none" stroke="#8c1020" strokeWidth="1.500" />
            {[[3, 17], [9, 14], [11, 7], [17, 3]].map(([x, y]) => <circle key={x} cx={x} cy={y} r="1.700" fill="#fff" stroke="#111" />)}
          </svg>
          <svg width="26" height="26" viewBox="0 0 28 28">
            <Hex><path d="M8 19C5 12 15 5 20 8C22 13 14 22 9 19C9 13 14 10 17 11C18 14 13 17 11 16" strokeWidth="1.500" stroke="#ddd" /></Hex>
          </svg>
        </div>
        <div className="absolute right-[10px] bottom-2"><Compass /></div>
      </div>
      <div className="shrink-0 h-[23px] flex items-center justify-between bg-[#f9f9f9] pl-1 pr-px text-[#666]">
        <span>–</span>
        <span className="flex items-center gap-1 text-xs">
          0.9.0076
          <svg width="12" height="12" viewBox="0 0 12 12" className="self-end">
            {[[10, 2], [6, 6], [10, 6], [2, 10], [6, 10], [10, 10]].map(([x, y]) => <rect key={`${x}-${y}`} x={x - 1} y={y - 1} width="2" height="2" fill="#999" />)}
          </svg>
        </span>
      </div>
    </div>
  )
}

export default function App() {
  return (
    <div className="flex h-screen w-full overflow-hidden">
      <Rhino />
      <Grasshopper />
    </div>
  )
}
